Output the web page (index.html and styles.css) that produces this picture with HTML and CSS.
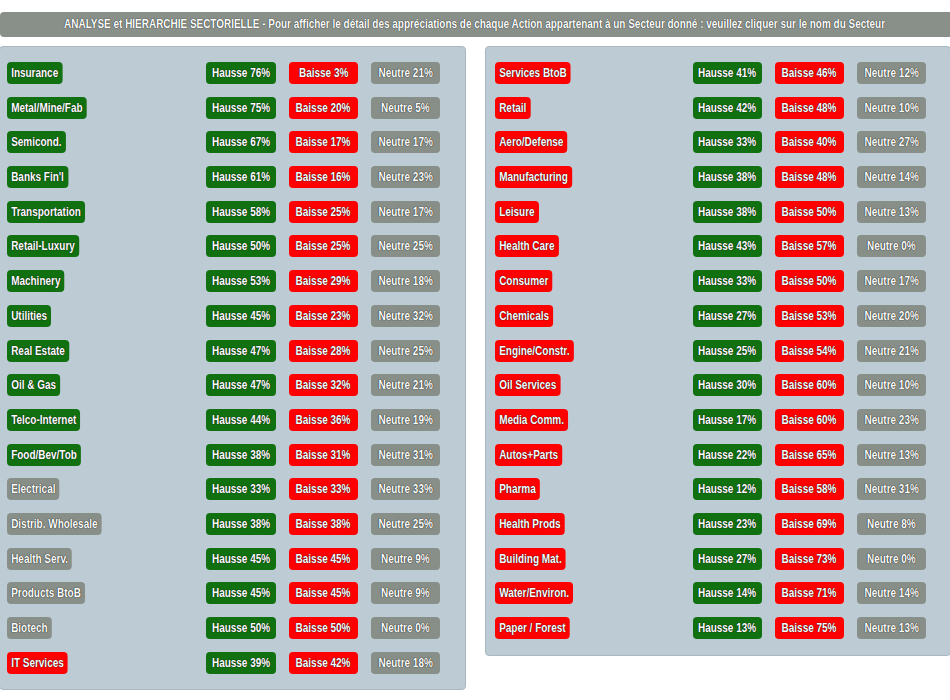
FILE: index.html
```html
<!DOCTYPE html>
<html lang="fr">
<head>
<meta charset="utf-8">
<title>Analyse et hiérarchie sectorielle</title>
<link rel="stylesheet" href="styles.css">
</head>
<body>
<div class="header"><span class="t">ANALYSE et HIERARCHIE SECTORIELLE - Pour afficher le détail des appréciations de chaque Action appartenant à un Secteur donné : veuillez cliquer sur le nom du Secteur</span></div>
<div class="panels">
  <div class="panel left">
    <div class="row"><span class="name g">Insurance</span><span class="v g"><span class="t">Hausse 76%</span></span><span class="v r"><span class="t">Baisse 3%</span></span><span class="v n"><span class="t">Neutre 21%</span></span></div>
    <div class="row"><span class="name g">Metal/Mine/Fab</span><span class="v g"><span class="t">Hausse 75%</span></span><span class="v r"><span class="t">Baisse 20%</span></span><span class="v n"><span class="t">Neutre 5%</span></span></div>
    <div class="row"><span class="name g">Semicond.</span><span class="v g"><span class="t">Hausse 67%</span></span><span class="v r"><span class="t">Baisse 17%</span></span><span class="v n"><span class="t">Neutre 17%</span></span></div>
    <div class="row"><span class="name g">Banks Fin'l</span><span class="v g"><span class="t">Hausse 61%</span></span><span class="v r"><span class="t">Baisse 16%</span></span><span class="v n"><span class="t">Neutre 23%</span></span></div>
    <div class="row"><span class="name g">Transportation</span><span class="v g"><span class="t">Hausse 58%</span></span><span class="v r"><span class="t">Baisse 25%</span></span><span class="v n"><span class="t">Neutre 17%</span></span></div>
    <div class="row"><span class="name g">Retail-Luxury</span><span class="v g"><span class="t">Hausse 50%</span></span><span class="v r"><span class="t">Baisse 25%</span></span><span class="v n"><span class="t">Neutre 25%</span></span></div>
    <div class="row"><span class="name g">Machinery</span><span class="v g"><span class="t">Hausse 53%</span></span><span class="v r"><span class="t">Baisse 29%</span></span><span class="v n"><span class="t">Neutre 18%</span></span></div>
    <div class="row"><span class="name g">Utilities</span><span class="v g"><span class="t">Hausse 45%</span></span><span class="v r"><span class="t">Baisse 23%</span></span><span class="v n"><span class="t">Neutre 32%</span></span></div>
    <div class="row"><span class="name g">Real Estate</span><span class="v g"><span class="t">Hausse 47%</span></span><span class="v r"><span class="t">Baisse 28%</span></span><span class="v n"><span class="t">Neutre 25%</span></span></div>
    <div class="row"><span class="name g">Oil &amp; Gas</span><span class="v g"><span class="t">Hausse 47%</span></span><span class="v r"><span class="t">Baisse 32%</span></span><span class="v n"><span class="t">Neutre 21%</span></span></div>
    <div class="row"><span class="name g">Telco-Internet</span><span class="v g"><span class="t">Hausse 44%</span></span><span class="v r"><span class="t">Baisse 36%</span></span><span class="v n"><span class="t">Neutre 19%</span></span></div>
    <div class="row"><span class="name g">Food/Bev/Tob</span><span class="v g"><span class="t">Hausse 38%</span></span><span class="v r"><span class="t">Baisse 31%</span></span><span class="v n"><span class="t">Neutre 31%</span></span></div>
    <div class="row"><span class="name n">Electrical</span><span class="v g"><span class="t">Hausse 33%</span></span><span class="v r"><span class="t">Baisse 33%</span></span><span class="v n"><span class="t">Neutre 33%</span></span></div>
    <div class="row"><span class="name n">Distrib. Wholesale</span><span class="v g"><span class="t">Hausse 38%</span></span><span class="v r"><span class="t">Baisse 38%</span></span><span class="v n"><span class="t">Neutre 25%</span></span></div>
    <div class="row"><span class="name n">Health Serv.</span><span class="v g"><span class="t">Hausse 45%</span></span><span class="v r"><span class="t">Baisse 45%</span></span><span class="v n"><span class="t">Neutre 9%</span></span></div>
    <div class="row"><span class="name n">Products BtoB</span><span class="v g"><span class="t">Hausse 45%</span></span><span class="v r"><span class="t">Baisse 45%</span></span><span class="v n"><span class="t">Neutre 9%</span></span></div>
    <div class="row"><span class="name n">Biotech</span><span class="v g"><span class="t">Hausse 50%</span></span><span class="v r"><span class="t">Baisse 50%</span></span><span class="v n"><span class="t">Neutre 0%</span></span></div>
    <div class="row"><span class="name r">IT Services</span><span class="v g"><span class="t">Hausse 39%</span></span><span class="v r"><span class="t">Baisse 42%</span></span><span class="v n"><span class="t">Neutre 18%</span></span></div>
  </div>
  <div class="panel right">
    <div class="row"><span class="name r">Services BtoB</span><span class="v g"><span class="t">Hausse 41%</span></span><span class="v r"><span class="t">Baisse 46%</span></span><span class="v n"><span class="t">Neutre 12%</span></span></div>
    <div class="row"><span class="name r">Retail</span><span class="v g"><span class="t">Hausse 42%</span></span><span class="v r"><span class="t">Baisse 48%</span></span><span class="v n"><span class="t">Neutre 10%</span></span></div>
    <div class="row"><span class="name r">Aero/Defense</span><span class="v g"><span class="t">Hausse 33%</span></span><span class="v r"><span class="t">Baisse 40%</span></span><span class="v n"><span class="t">Neutre 27%</span></span></div>
    <div class="row"><span class="name r">Manufacturing</span><span class="v g"><span class="t">Hausse 38%</span></span><span class="v r"><span class="t">Baisse 48%</span></span><span class="v n"><span class="t">Neutre 14%</span></span></div>
    <div class="row"><span class="name r">Leisure</span><span class="v g"><span class="t">Hausse 38%</span></span><span class="v r"><span class="t">Baisse 50%</span></span><span class="v n"><span class="t">Neutre 13%</span></span></div>
    <div class="row"><span class="name r">Health Care</span><span class="v g"><span class="t">Hausse 43%</span></span><span class="v r"><span class="t">Baisse 57%</span></span><span class="v n"><span class="t">Neutre 0%</span></span></div>
    <div class="row"><span class="name r">Consumer</span><span class="v g"><span class="t">Hausse 33%</span></span><span class="v r"><span class="t">Baisse 50%</span></span><span class="v n"><span class="t">Neutre 17%</span></span></div>
    <div class="row"><span class="name r">Chemicals</span><span class="v g"><span class="t">Hausse 27%</span></span><span class="v r"><span class="t">Baisse 53%</span></span><span class="v n"><span class="t">Neutre 20%</span></span></div>
    <div class="row"><span class="name r">Engine/Constr.</span><span class="v g"><span class="t">Hausse 25%</span></span><span class="v r"><span class="t">Baisse 54%</span></span><span class="v n"><span class="t">Neutre 21%</span></span></div>
    <div class="row"><span class="name r">Oil Services</span><span class="v g"><span class="t">Hausse 30%</span></span><span class="v r"><span class="t">Baisse 60%</span></span><span class="v n"><span class="t">Neutre 10%</span></span></div>
    <div class="row"><span class="name r">Media Comm.</span><span class="v g"><span class="t">Hausse 17%</span></span><span class="v r"><span class="t">Baisse 60%</span></span><span class="v n"><span class="t">Neutre 23%</span></span></div>
    <div class="row"><span class="name r">Autos+Parts</span><span class="v g"><span class="t">Hausse 22%</span></span><span class="v r"><span class="t">Baisse 65%</span></span><span class="v n"><span class="t">Neutre 13%</span></span></div>
    <div class="row"><span class="name r">Pharma</span><span class="v g"><span class="t">Hausse 12%</span></span><span class="v r"><span class="t">Baisse 58%</span></span><span class="v n"><span class="t">Neutre 31%</span></span></div>
    <div class="row"><span class="name r">Health Prods</span><span class="v g"><span class="t">Hausse 23%</span></span><span class="v r"><span class="t">Baisse 69%</span></span><span class="v n"><span class="t">Neutre 8%</span></span></div>
    <div class="row"><span class="name r">Building Mat.</span><span class="v g"><span class="t">Hausse 27%</span></span><span class="v r"><span class="t">Baisse 73%</span></span><span class="v n"><span class="t">Neutre 0%</span></span></div>
    <div class="row"><span class="name r">Water/Environ.</span><span class="v g"><span class="t">Hausse 14%</span></span><span class="v r"><span class="t">Baisse 71%</span></span><span class="v n"><span class="t">Neutre 14%</span></span></div>
    <div class="row"><span class="name r">Paper / Forest</span><span class="v g"><span class="t">Hausse 13%</span></span><span class="v r"><span class="t">Baisse 75%</span></span><span class="v n"><span class="t">Neutre 13%</span></span></div>
  </div>
</div>
</body>
</html>
```

FILE: styles.css
```css
html, body {
  margin: 0;
  padding: 0;
  background: #ffffff;
  overflow: hidden;
}
body {
  font-family: "Liberation Sans", Arial, sans-serif;
  font-weight: bold;
  font-size: 12px;
  color: #ffffff;
  width: 950px;
}
.t {
  display: inline-block;
  white-space: nowrap;
  transform: scaleX(0.83);
}
.header {
  margin-top: 12px;
  height: 25px;
  width: 954px;
  background: #889089;
  border-radius: 4px;
  line-height: 25px;
  display: flex;
  justify-content: center;
  text-shadow: 0 0 1px rgba(0, 0, 0, 0.8), 0 0 1px rgba(0, 0, 0, 0.4);
  padding-right: 4px;
  box-sizing: border-box;
}
.panels {
  display: flex;
  gap: 19px;
  align-items: flex-start;
  margin-top: 9px;
  width: 970px;
}
.panel {
  background: #bdcbd4;
  border: 1px solid #a8b8c3;
  border-radius: 4px;
  width: 466px;
  box-sizing: border-box;
  display: flex;
  flex-direction: column;
  gap: 12.7px;
}
.panel.left {
  padding: 15px 0 15px 7px;
  margin-left: -1px;
  width: 467px;
}
.panel.right {
  padding: 15px 0 16px 9px;
}
.row {
  display: grid;
  grid-template-columns: 186px 70px 69px 69px;
  column-gap: 13px;
  height: 22px;
  align-items: stretch;
}
.right .row {
  grid-template-columns: 185px 69px 69px 69px;
}
.name, .v {
  border-radius: 4px;
  line-height: 22px;
  height: 22px;
  text-shadow: 0 0 1px rgba(0, 0, 0, 0.9), 0 0 1px rgba(0, 0, 0, 0.6);
  white-space: nowrap;
}
.name {
  justify-self: start;
  padding: 0 5px;
  transform: scaleX(0.83);
  transform-origin: left center;
  border-radius: 5px / 4px;
}
.v {
  display: flex;
  justify-content: center;
}
.g { background: #117111; }
.r { background: #fe0000; }
.n { background: #888f88; }
```
